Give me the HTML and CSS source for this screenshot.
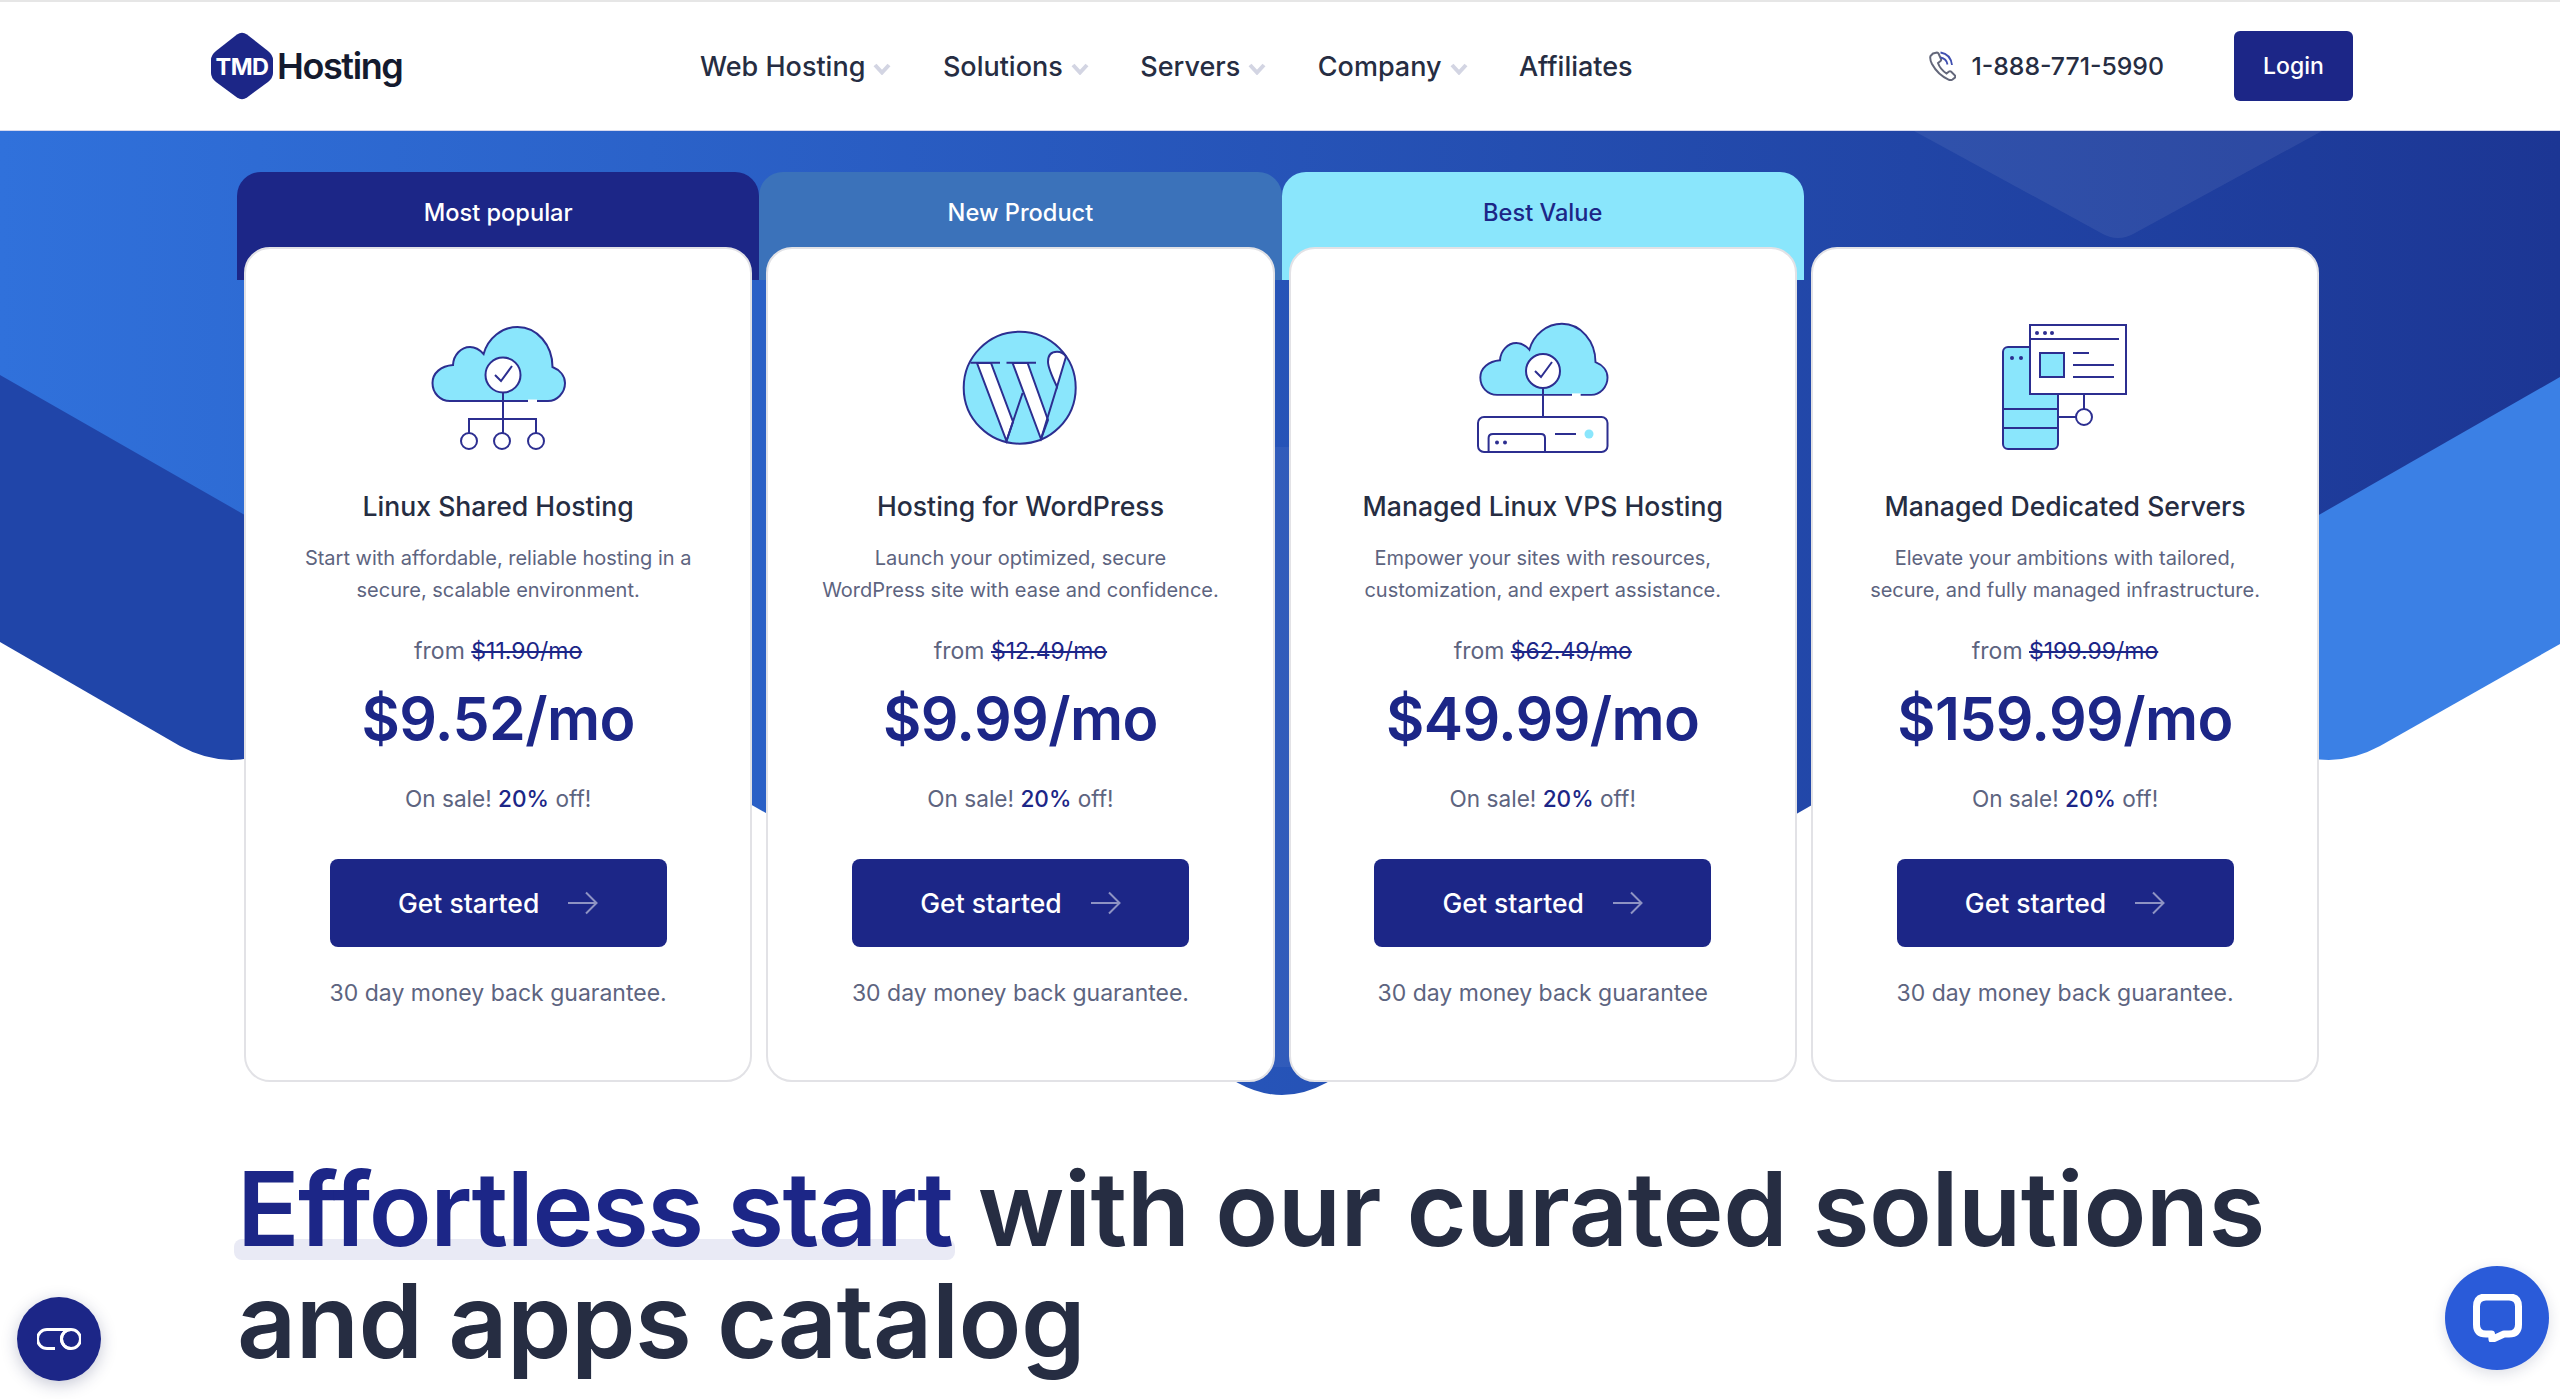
FILE: index.html
```html
<!DOCTYPE html>
<html lang="en">
<head>
<meta charset="utf-8">
<title>TMD Hosting</title>
<link rel="stylesheet" href="styles.css">
</head>
<body>
<header class="topbar">
  <a class="logo" href="#">
    <svg class="logo-mark" viewBox="0 0 62 68" width="62" height="68"><path d="M26 2.5 Q31 -1 36 2.5 L57 19 Q62 23 62 28 L62 41 Q62 46 57 50 L36 65.5 Q31 69 26 65.5 L5 50 Q0 46 0 41 L0 28 Q0 23 5 19 Z" fill="#1c2687"/><text class="logo-tmd" x="31" y="43" text-anchor="middle">TMD</text></svg>
    <span class="logo-word">Hosting</span>
  </a>
  <nav class="nav">
    <a class="nav-item" href="#">Web Hosting<svg class="caret" viewBox="0 0 18 12" width="18" height="12"><path d="M2 2 L9 9.5 L16 2" /></svg></a>
    <a class="nav-item" href="#">Solutions<svg class="caret" viewBox="0 0 18 12" width="18" height="12"><path d="M2 2 L9 9.5 L16 2" /></svg></a>
    <a class="nav-item" href="#">Servers<svg class="caret" viewBox="0 0 18 12" width="18" height="12"><path d="M2 2 L9 9.5 L16 2" /></svg></a>
    <a class="nav-item" href="#">Company<svg class="caret" viewBox="0 0 18 12" width="18" height="12"><path d="M2 2 L9 9.5 L16 2" /></svg></a>
    <a class="nav-item" href="#">Affiliates</a>
  </nav>
  <a class="phone" href="#">
    <svg viewBox="0 0 28 30" width="28" height="30" fill="none"><path d="M5 2.5 L9 1.5 Q10 1.5 10.5 2.5 L13 8 Q13.5 9 12.5 10 L10 12 Q12 18 18.5 22.5 L21 20.5 Q22 19.8 23 20.5 L27 24.5 Q27.5 25.5 27 26.5 L24.5 28.5 Q23 29.5 21 28.8 Q10 24 4 13 Q1.5 8 2.5 5 Z" stroke="#63677a" stroke-width="2"/><path d="M12.5 1.5 Q22.5 3 24 14 M12.5 6.5 Q18.5 7.5 19.5 13.5" stroke="#3f4fb0" stroke-width="1.8"/></svg>
    <span>1-888-771-5990</span>
  </a>
  <a class="login" href="#">Login</a>
</header>

<section class="hero">
  <svg class="hero-bg" viewBox="0 0 2560 980" width="2560" height="980" aria-hidden="true">
    <defs>
      <linearGradient id="mainGrad" x1="0" y1="0" x2="1" y2="0"><stop offset="0" stop-color="#3071db"/><stop offset="1" stop-color="#1c3694"/></linearGradient>
      <clipPath id="chevClip"><path d="M0 0 H2560 V246 L1330 948 Q1282 975 1234 948 L0 244 Z"/></clipPath>
    </defs>
    <path d="M0 200 L0 511 L180 615 Q215 634 250 627 L500 500 L500 200 Z" fill="#2045a9"/>
    <path d="M2560 200 L2560 513 L2380 615 Q2345 634 2310 627 L2060 500 L2060 200 Z" fill="#3b80e5"/>
    <path d="M0 0 H2560 V246 L1326 952 Q1282 976 1238 952 L0 244 Z" fill="url(#mainGrad)"/>
    <rect x="1200" y="316" width="164" height="620" fill="#fff" opacity="0.05" clip-path="url(#chevClip)"/>
    <path d="M1914 0 H2322 L2135 102 Q2118 112 2101 102 Z" fill="#fff" opacity="0.07"/>
  </svg>

  <div class="plans">
    <article class="plan">
      <div class="plan-tab tab-navy">Most popular</div>
      <div class="plan-card">
        <svg class="plan-icon" viewBox="428 322 140 130" width="140" height="130" fill="none" stroke="#2c2e90" stroke-width="2">
          <g transform="translate(428 322)">
            <path d="M22 79 C12 79 4.5 71 4.5 61 C4.5 51 13 44 25 43 C25.5 33 33 25 42 25 C47 25 52 28 55.6 32 C60 16 74 5 89.5 5 C109 5 124.5 23 124.5 45 C132 48 137 54 137 61 C137 71 129 79 120 79 Z" fill="#8ae6fc"/>
            <path d="M100 79 H109" stroke="#fff" stroke-width="3"/>
            <circle cx="75" cy="53" r="17.5" fill="#fff"/>
            <path d="M67 53 L73 59 L84 44"/>
            <path d="M75 70.5 V111 M41 111 V97 H108 V111"/>
            <circle cx="41" cy="119" r="8" fill="#fff"/><circle cx="74" cy="119" r="8" fill="#fff"/><circle cx="108" cy="119" r="8" fill="#fff"/>
          </g>
        </svg>
        <h3 class="plan-title">Linux Shared Hosting</h3>
        <p class="plan-desc">Start with affordable, reliable hosting in a<br>secure, scalable environment.</p>
        <p class="plan-from">from <s>$11.90/mo</s></p>
        <p class="plan-price">$9.52/mo</p>
        <p class="plan-sale">On sale! <b>20%</b> off!</p>
        <a class="plan-btn" href="#">Get started<svg viewBox="0 0 30 24" width="30" height="24" fill="none"><path d="M0 12 H28 M18 1.5 L28.5 12 L18 22.5"/></svg></a>
        <p class="plan-note">30 day money back guarantee.</p>
      </div>
    </article>

    <article class="plan">
      <div class="plan-tab tab-steel">New Product</div>
      <div class="plan-card">
        <svg class="plan-icon" viewBox="951 322 140 130" width="140" height="130" fill="none" stroke="#2c2e90" stroke-width="2">
          <circle cx="1020.7" cy="387.7" r="56" fill="#8ae6fc"/>
          <path d="M978 363 H992 L1014 421.7 L1007.5 441 Z" fill="#fff"/>
          <path d="M1013.6 363 H1028.6 L1049 420 L1042 439 Z" fill="#fff"/>
          <path d="M1058 351.7 Q1049 351.7 1049 361.7 Q1049 368 1058 386.7 L1067 356.7 Q1064 351.7 1058 351.7 Z" fill="#fff"/>
          <path d="M971.4 362.7 H1001 M1007.5 362.7 H1037 M1007.5 441 L1023.6 393 M1042 439 L1058 386.7"/>
        </svg>
        <h3 class="plan-title">Hosting for WordPress</h3>
        <p class="plan-desc">Launch your optimized, secure<br>WordPress site with ease and confidence.</p>
        <p class="plan-from">from <s>$12.49/mo</s></p>
        <p class="plan-price">$9.99/mo</p>
        <p class="plan-sale">On sale! <b>20%</b> off!</p>
        <a class="plan-btn" href="#">Get started<svg viewBox="0 0 30 24" width="30" height="24" fill="none"><path d="M0 12 H28 M18 1.5 L28.5 12 L18 22.5"/></svg></a>
        <p class="plan-note">30 day money back guarantee.</p>
      </div>
    </article>

    <article class="plan">
      <div class="plan-tab tab-cyan">Best Value</div>
      <div class="plan-card">
        <svg class="plan-icon" viewBox="1474 322 140 130" width="140" height="130" fill="none" stroke="#2c2e90" stroke-width="2">
          <g transform="translate(1477 319) scale(0.96)">
            <path d="M22 79 C12 79 4.5 71 4.5 61 C4.5 51 13 44 25 43 C25.5 33 33 25 42 25 C47 25 52 28 55.6 32 C60 16 74 5 89.5 5 C109 5 124.5 23 124.5 45 C132 48 137 54 137 61 C137 71 129 79 120 79 Z" fill="#8ae6fc"/>
            <path d="M100 79 H109" stroke="#fff" stroke-width="3"/>
          </g>
          <circle cx="1544" cy="371" r="17" fill="#fff"/>
          <path d="M1536 371 L1542 377 L1553 362"/>
          <path d="M1544 388 V417"/>
          <rect x="1479" y="417" width="129.5" height="35" rx="6"/>
          <path d="M1489.6 452 V438 Q1489.6 434 1494 434 H1542 Q1546 434 1546 438 V452 M1556 434 H1577"/>
          <circle cx="1498" cy="442.5" r="2" fill="#2c2e90" stroke="none"/><circle cx="1506" cy="442.5" r="2" fill="#2c2e90" stroke="none"/>
          <circle cx="1590" cy="434" r="4.5" fill="#8ae6fc" stroke="none"/>
        </svg>
        <h3 class="plan-title">Managed Linux VPS Hosting</h3>
        <p class="plan-desc">Empower your sites with resources,<br>customization, and expert assistance.</p>
        <p class="plan-from">from <s>$62.49/mo</s></p>
        <p class="plan-price">$49.99/mo</p>
        <p class="plan-sale">On sale! <b>20%</b> off!</p>
        <a class="plan-btn" href="#">Get started<svg viewBox="0 0 30 24" width="30" height="24" fill="none"><path d="M0 12 H28 M18 1.5 L28.5 12 L18 22.5"/></svg></a>
        <p class="plan-note">30 day money back guarantee</p>
      </div>
    </article>

    <article class="plan">
      <div class="plan-tab"></div>
      <div class="plan-card">
        <svg class="plan-icon" viewBox="1996 322 140 130" width="140" height="130" fill="none" stroke="#2c2e90" stroke-width="2">
          <rect x="2004" y="347" width="55" height="102" rx="5" fill="#8ae6fc"/>
          <path d="M2004 409 H2059 M2004 428 H2059"/>
          <circle cx="2013" cy="358" r="2" fill="#2c2e90" stroke="none"/><circle cx="2022" cy="358" r="2" fill="#2c2e90" stroke="none"/>
          <rect x="2031" y="325" width="96" height="69" fill="#fff"/>
          <path d="M2031 339 H2120 M2074 353 H2090 M2074 365 H2115 M2074 377 H2115 M2085 394 V409 M2059 417 H2077"/>
          <circle cx="2038" cy="333" r="2" fill="#2c2e90" stroke="none"/><circle cx="2046" cy="333" r="2" fill="#2c2e90" stroke="none"/><circle cx="2053" cy="333" r="2" fill="#2c2e90" stroke="none"/>
          <rect x="2041" y="353" width="24" height="24" fill="#8ae6fc"/>
          <circle cx="2085" cy="417" r="8" fill="#fff"/>
        </svg>
        <h3 class="plan-title">Managed Dedicated Servers</h3>
        <p class="plan-desc">Elevate your ambitions with tailored,<br>secure, and fully managed infrastructure.</p>
        <p class="plan-from">from <s>$199.99/mo</s></p>
        <p class="plan-price">$159.99/mo</p>
        <p class="plan-sale">On sale! <b>20%</b> off!</p>
        <a class="plan-btn" href="#">Get started<svg viewBox="0 0 30 24" width="30" height="24" fill="none"><path d="M0 12 H28 M18 1.5 L28.5 12 L18 22.5"/></svg></a>
        <p class="plan-note">30 day money back guarantee.</p>
      </div>
    </article>
  </div>
</section>

<section class="catalog">
  <h2 class="catalog-title"><span class="accent">Effortless start</span> with our curated solutions<br>and apps catalog</h2>
</section>

<button class="fab-a11y" aria-label="Accessibility">
  <svg viewBox="0 0 44 22" width="44" height="22" fill="none" stroke="#fff" stroke-width="3"><path d="M18 20.5 H10 A9.5 9.5 0 0 1 10 1.5 H34 A9.5 9.5 0 0 1 34 20.5 A9.5 9.5 0 0 1 34 1.5"/><path d="M34 1.5 A9.5 9.5 0 0 0 34 20.5"/></svg>
</button>
<button class="fab-chat" aria-label="Chat">
  <svg viewBox="0 0 49 48" width="49" height="48" fill="none"><path d="M18.5 40.5 H13 Q3.5 40.5 3.5 31 V13 Q3.5 3.5 13 3.5 H36 Q45.5 3.5 45.5 13 V31 Q45.5 40.5 36 40.5 H31 L19 46 Z" stroke="#fff" stroke-width="7" stroke-linejoin="round" transform="translate(0 -0.5)"/></svg>
</button>
</body>
</html>
```

FILE: styles.css
```css
* { box-sizing: border-box; }
html, body { margin: 0; padding: 0; background: #fff; }
body { font-family: "Inter", "Liberation Sans", sans-serif; color: #262d42; overflow: hidden; height: 1399px; }
a { color: inherit; text-decoration: none; }
p, h2, h3 { margin: 0; }

.topbar { height: 131px; display: flex; align-items: center; padding: 0 207px 0 211px; background: #fff; border-top: 2px solid #e6e6e6; border-bottom: 1px solid #d5d8ee; }
.logo { display: flex; align-items: center; gap: 4px; width: 489px; }
.logo-tmd { font-size: 23.5px; font-weight: 700; fill: #fff; letter-spacing: -0.5px; }
.logo-word { font-size: 36px; font-weight: 600; letter-spacing: -1.4px; color: #141a2e; }
.nav { display: flex; gap: 51.5px; font-size: 27px; font-weight: 500; color: #262d42; }
.nav-item { display: flex; align-items: center; gap: 8px; }
.caret { fill: none; stroke: #d3d5e3; stroke-width: 4; margin-top: 6px; }
.phone { margin-left: auto; display: flex; align-items: center; gap: 15px; font-size: 24.8px; font-weight: 500; }
.login { margin-left: 70px; width: 119px; height: 70px; display: flex; align-items: center; justify-content: center; border-radius: 6px; background: #1c2687; color: #fff; font-size: 23px; font-weight: 500; }

.hero { position: relative; padding: 41px 0 0 237px; }
.hero-bg { position: absolute; left: 0; top: 0; display: block; }
.plans { position: relative; display: grid; grid-template-columns: repeat(4, 522.3px); }
.plan-tab { height: 108px; padding-top: 26px; border-radius: 24px 24px 0 0; text-align: center; font-size: 23.6px; line-height: 30px; font-weight: 500; color: #fff; }
.tab-navy { background: #1c2687; }
.tab-steel { background: #3b72ba; }
.tab-cyan { background: #8ae6fc; color: #1c2687; }
.plan-card { position: relative; height: 835px; margin: -33px 7px 0; padding-top: 73px; display: flex; flex-direction: column; align-items: center; background: #fff; border: 2px solid #e2e2e6; border-radius: 26px; text-align: center; }
.plan-icon { display: block; overflow: visible; }
.plan-title { margin-top: 36px; font-size: 26.6px; line-height: 36px; font-weight: 500; color: #262d42; }
.plan-desc { margin-top: 18px; font-size: 20px; line-height: 32px; color: #5d6480; }
.plan-from { margin-top: 29px; font-size: 23px; line-height: 32px; color: #5d6480; }
.plan-from s { color: #1c2687; }
.plan-price { margin-top: 16px; font-size: 59px; line-height: 72px; font-weight: 600; color: #1c2687; letter-spacing: -0.6px; }
.plan-sale { margin-top: 28px; font-size: 22.6px; line-height: 32px; color: #5d6480; }
.plan-sale b { font-weight: 500; color: #1c2687; }
.plan-btn { margin-top: 44px; width: 337px; height: 88px; display: flex; align-items: center; justify-content: center; gap: 29px; border-radius: 8px; background: #1c2687; color: #fff; font-size: 26.5px; font-weight: 500; }
.plan-btn svg { stroke: rgba(255,255,255,.5); stroke-width: 2; }
.plan-note { margin-top: 30px; font-size: 23px; line-height: 32px; color: #5d6480; }

.catalog { padding: 71px 0 0 237px; }
.catalog-title { font-size: 103.4px; line-height: 112px; font-weight: 600; color: #262d42; letter-spacing: -0.5px; }
.accent { position: relative; display: inline-block; color: #1c2687; z-index: 0; letter-spacing: -1.5px; }
.accent::after { content: ""; position: absolute; z-index: -1; left: -3px; right: -3px; bottom: 5px; height: 21px; border-radius: 8px; background: #e9eaf5; }

.fab-a11y, .fab-chat { position: fixed; display: flex; align-items: center; justify-content: center; padding: 0; border: 0; border-radius: 50%; }
.fab-a11y { left: 17px; top: 1297px; width: 84px; height: 84px; background: #1c2687; box-shadow: 0 4px 16px rgba(30,40,90,.25); }
.fab-chat { left: 2445px; top: 1266px; width: 104px; height: 104px; background: #2a5bd9; box-shadow: 0 4px 14px rgba(30,40,90,.15); }
```
